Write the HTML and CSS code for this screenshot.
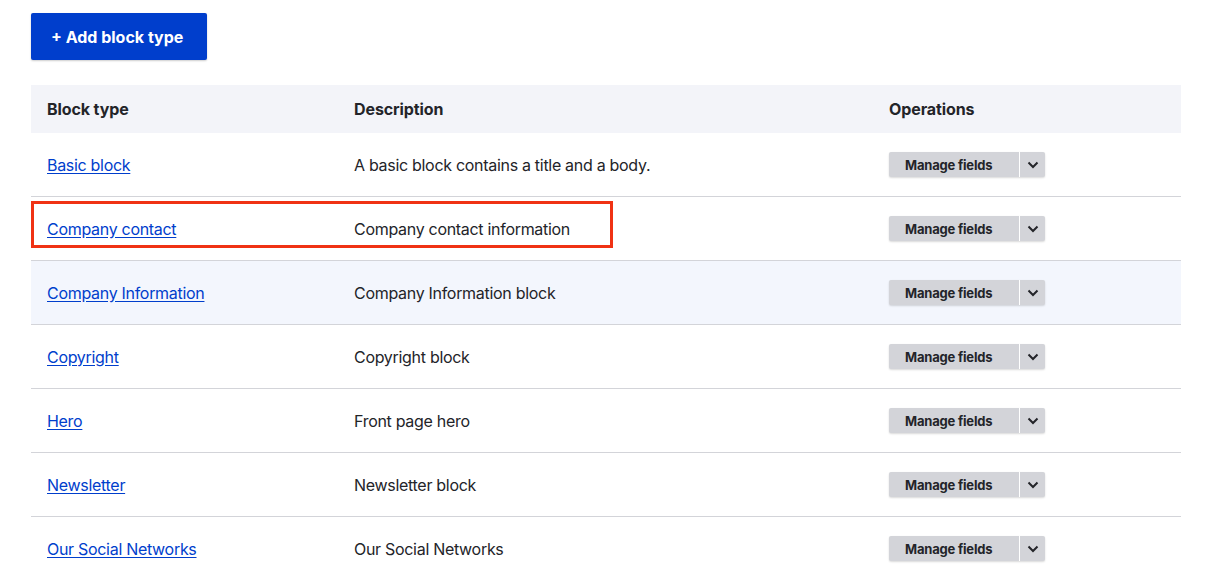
FILE: index.html
```html
<!DOCTYPE html>
<html lang="en">
<head>
<meta charset="utf-8">
<title>Block types</title>
<link rel="stylesheet" href="styles.css">
</head>
<body>
<div class="page">
  <div class="actions">
    <a class="btn-primary" href="#">+ Add block type</a>
  </div>
  <table class="listing">
    <thead>
      <tr>
        <th class="c1">Block type</th>
        <th class="c2">Description</th>
        <th class="c3">Operations</th>
      </tr>
    </thead>
    <tbody>
      <tr>
        <td><a href="#">Basic block</a></td>
        <td>A basic block contains a title and a body.</td>
        <td><div class="dropbutton"><span class="main">Manage fields</span><span class="toggle"><svg width="12" height="8" viewBox="0 0 12 8"><path d="M1.5 1.5 6 6l4.5-4.5" fill="none" stroke="#232429" stroke-width="2"/></svg></span></div></td>
      </tr>
      <tr class="highlight">
        <td><a href="#">Company contact</a></td>
        <td>Company contact information</td>
        <td><div class="dropbutton"><span class="main">Manage fields</span><span class="toggle"><svg width="12" height="8" viewBox="0 0 12 8"><path d="M1.5 1.5 6 6l4.5-4.5" fill="none" stroke="#232429" stroke-width="2"/></svg></span></div></td>
      </tr>
      <tr class="hover">
        <td><a href="#">Company Information</a></td>
        <td>Company Information block</td>
        <td><div class="dropbutton"><span class="main">Manage fields</span><span class="toggle"><svg width="12" height="8" viewBox="0 0 12 8"><path d="M1.5 1.5 6 6l4.5-4.5" fill="none" stroke="#232429" stroke-width="2"/></svg></span></div></td>
      </tr>
      <tr>
        <td><a href="#">Copyright</a></td>
        <td>Copyright block</td>
        <td><div class="dropbutton"><span class="main">Manage fields</span><span class="toggle"><svg width="12" height="8" viewBox="0 0 12 8"><path d="M1.5 1.5 6 6l4.5-4.5" fill="none" stroke="#232429" stroke-width="2"/></svg></span></div></td>
      </tr>
      <tr>
        <td><a href="#">Hero</a></td>
        <td>Front page hero</td>
        <td><div class="dropbutton"><span class="main">Manage fields</span><span class="toggle"><svg width="12" height="8" viewBox="0 0 12 8"><path d="M1.5 1.5 6 6l4.5-4.5" fill="none" stroke="#232429" stroke-width="2"/></svg></span></div></td>
      </tr>
      <tr>
        <td><a href="#">Newsletter</a></td>
        <td>Newsletter block</td>
        <td><div class="dropbutton"><span class="main">Manage fields</span><span class="toggle"><svg width="12" height="8" viewBox="0 0 12 8"><path d="M1.5 1.5 6 6l4.5-4.5" fill="none" stroke="#232429" stroke-width="2"/></svg></span></div></td>
      </tr>
      <tr>
        <td><a href="#">Our Social Networks</a></td>
        <td>Our Social Networks</td>
        <td><div class="dropbutton"><span class="main">Manage fields</span><span class="toggle"><svg width="12" height="8" viewBox="0 0 12 8"><path d="M1.5 1.5 6 6l4.5-4.5" fill="none" stroke="#232429" stroke-width="2"/></svg></span></div></td>
      </tr>
    </tbody>
  </table>
</div>
</body>
</html>
```
FILE: styles.css
```css
html, body {
  margin: 0;
  padding: 0;
  background: #ffffff;
}
body {
  font-family: Inter, "Noto Sans", "Liberation Sans", sans-serif;
  font-size: 16px;
  color: #232429;
}
.page {
  padding: 13px 40px 0 31px;
}
.actions {
  margin-bottom: 25px;
}
.btn-primary {
  display: inline-flex;
  align-items: center;
  height: 47px;
  padding: 0 24px 0 20px;
  box-sizing: border-box;
  background: #003ecc;
  color: #ffffff;
  font-weight: 700;
  font-size: 16px;
  text-decoration: none;
  border-radius: 2px;
  box-shadow: 0 1px 2px rgba(0, 0, 0, 0.2);
}
.listing {
  width: 1150px;
  border-collapse: collapse;
  table-layout: fixed;
}
.listing th {
  background: #f3f4f9;
  height: 48px;
  padding: 0 16px;
  text-align: left;
  font-weight: 700;
  font-size: 16px;
  color: #232429;
  letter-spacing: -0.1px;
}
.c1 { width: 275px; }
.c2 { width: 503px; }
.listing td {
  height: 63px;
  padding: 0 16px;
  border-bottom: 1px solid #d3d4d9;
  vertical-align: middle;
  letter-spacing: -0.3px;
}
.listing a {
  color: #003ecc;
  text-decoration: underline;
  text-underline-offset: 2px;
}
.listing tr.hover td {
  background: #f3f6fd;
}
.listing tr.highlight td:first-child {
  position: relative;
}
.listing tr.highlight td:first-child::after {
  content: "";
  position: absolute;
  left: 0;
  top: 4px;
  width: 582px;
  height: 47px;
  box-sizing: border-box;
  border: 3px solid #f03214;
  pointer-events: none;
}
.dropbutton {
  display: inline-flex;
  height: 25px;
  border-radius: 2px;
  background: #d3d4d9;
  box-shadow: 0 1px 2px rgba(0, 0, 0, 0.15);
  font-size: 13px;
  font-weight: 700;
  color: #232429;
  letter-spacing: -0.2px;
}
.dropbutton .main {
  display: flex;
  align-items: center;
  box-sizing: border-box;
  width: 131px;
  padding-left: 16px;
  border-right: 1px solid #ffffff;
}
.dropbutton .toggle {
  display: flex;
  align-items: center;
  justify-content: center;
  width: 25px;
}
```
